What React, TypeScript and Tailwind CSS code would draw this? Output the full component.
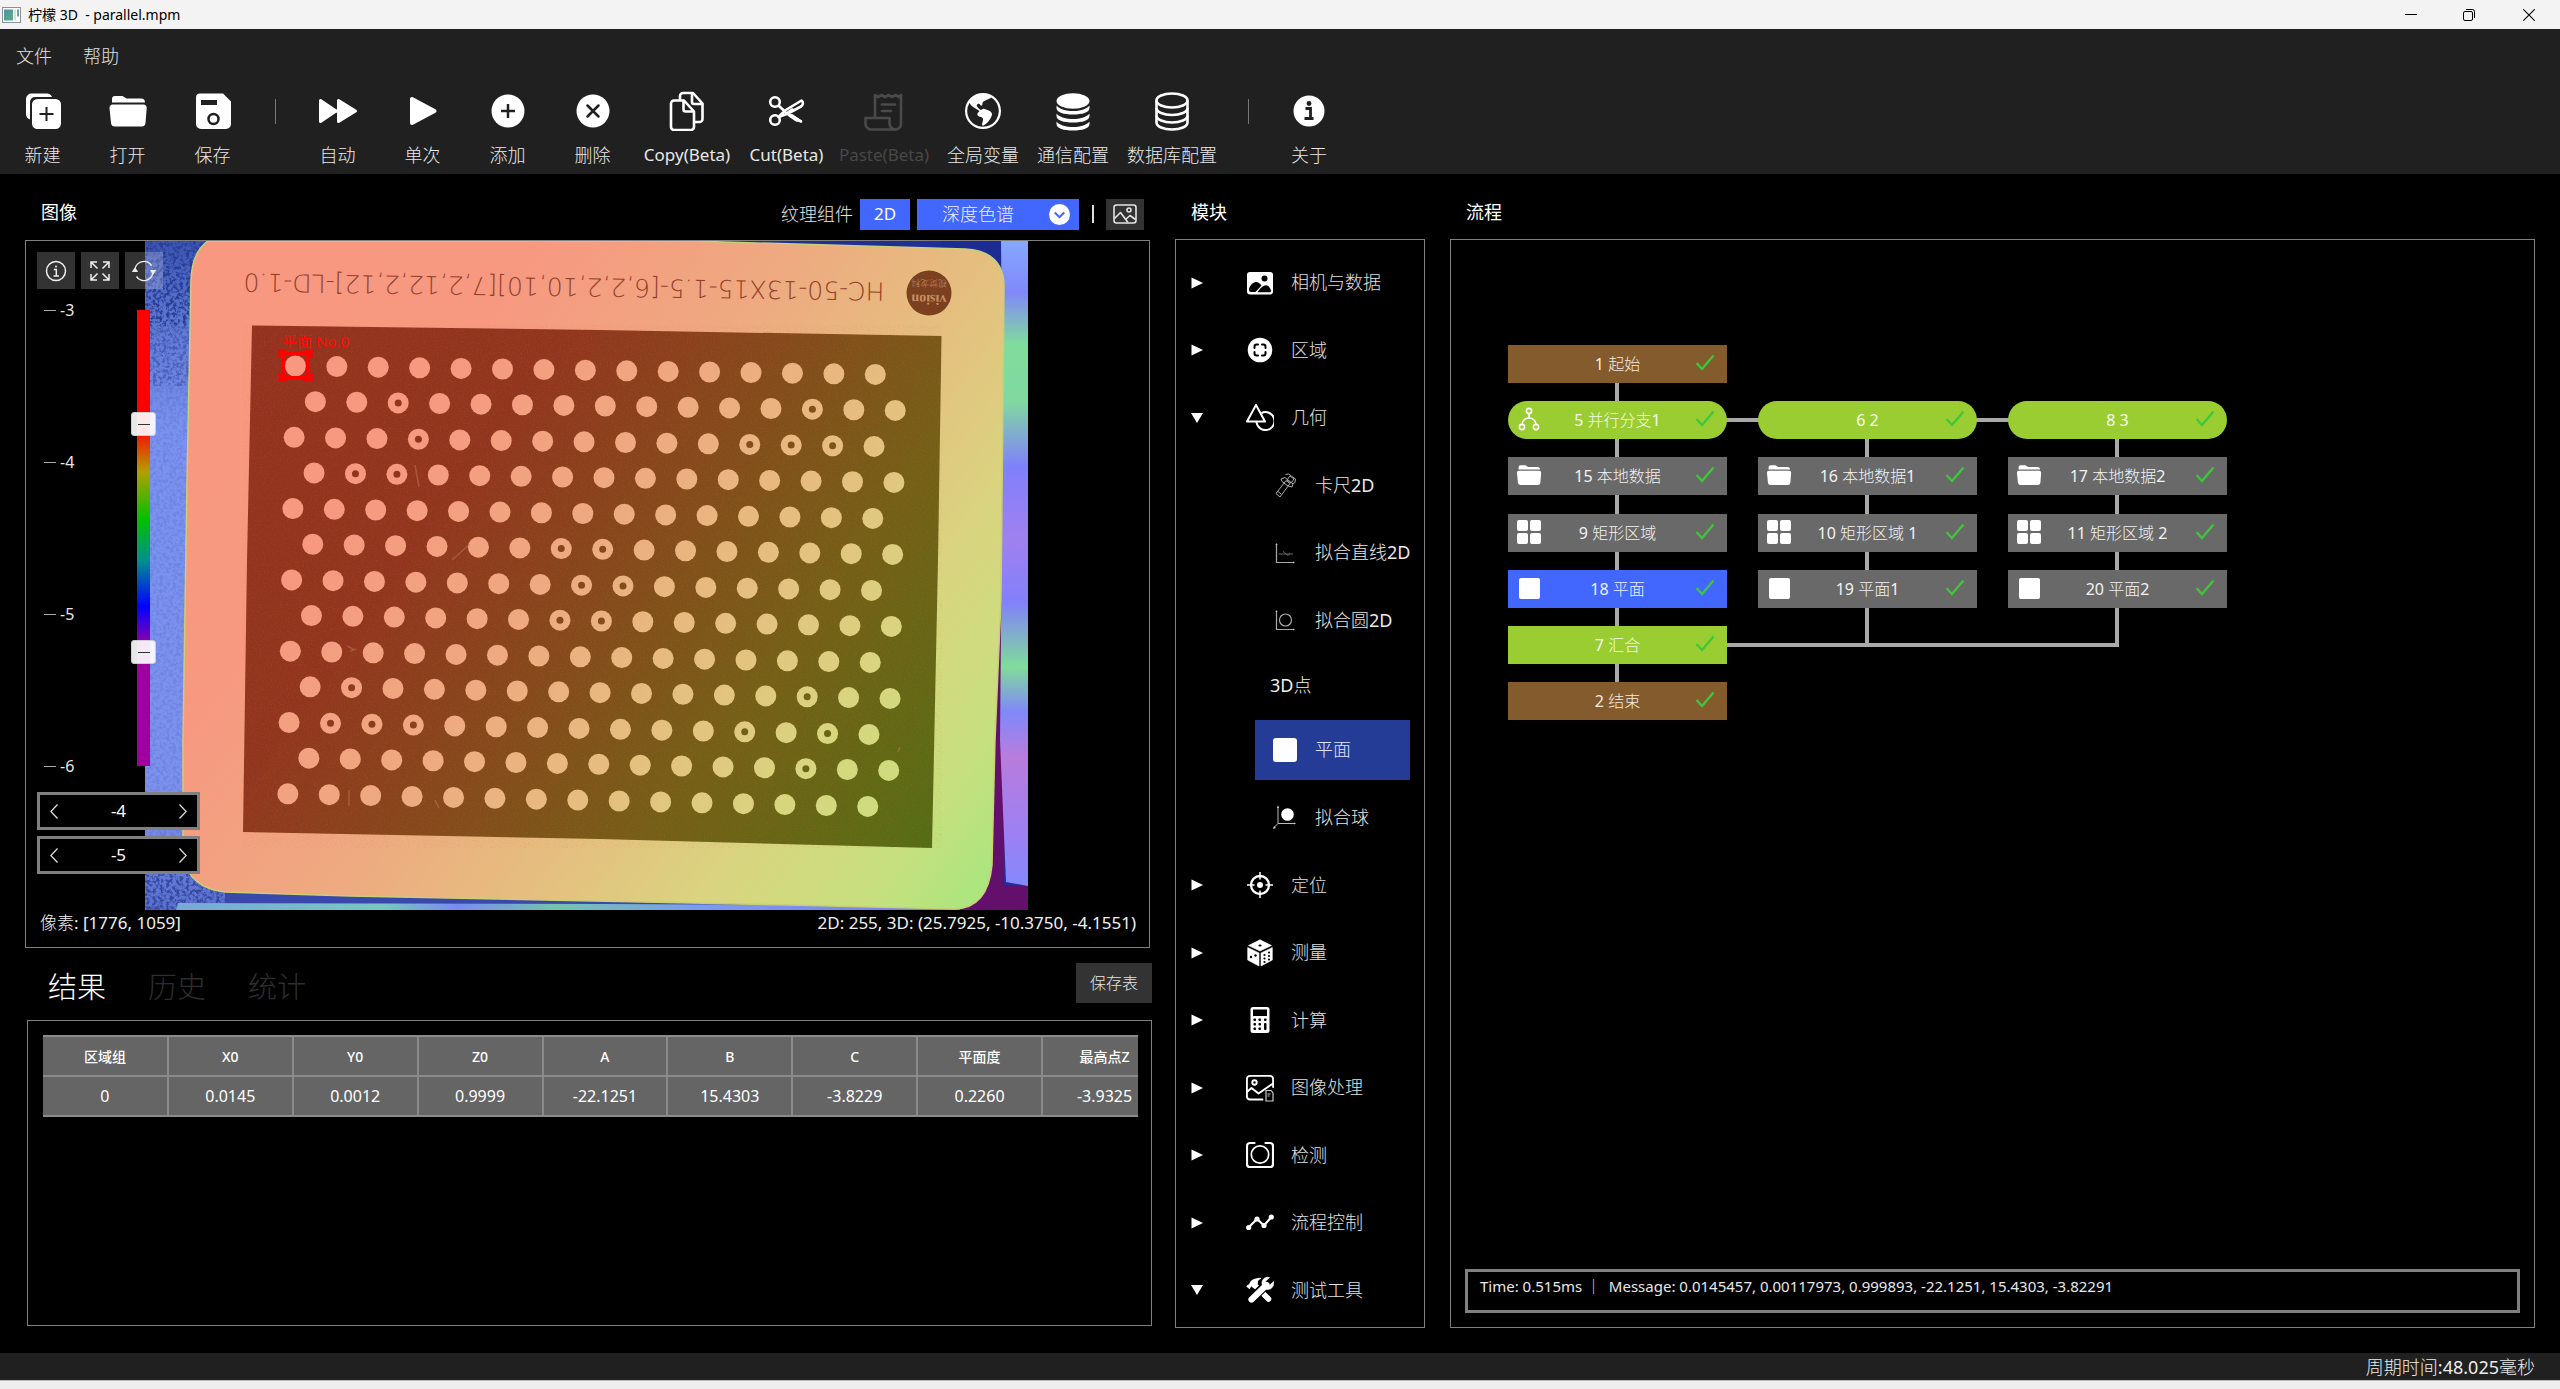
import React, { useState } from "react";
import { BsGlobeAmericas } from "react-icons/bs";

type IconProps = { children: React.ReactNode; className?: string; box?: number };

function Glyph({ children, className = "size-10", box = 40 }: IconProps) {
  return (
    <svg viewBox={`0 0 ${box} ${box}`} className={className} fill="none" stroke="none" aria-hidden="true">
      {children}
    </svg>
  );
}

/* Latin runs are set in the regular weight, Chinese runs in the light one. */
function Label({ text }: { text: string }) {
  return (
    <>
      {text.split(/([\x20-\x7e]+)/).map((part, i) =>
        i % 2 ? <span key={i} className="whitespace-pre font-normal">{part}</span> : part,
      )}
    </>
  );
}

/* ---------- toolbar icons ---------- */

const NewIcon = () => (
  <Glyph>
    <path d="M9 2.500h15a5.500 5.500 0 0 1 5 3.500H12a5 5 0 0 0-5 5v17.500a6 6 0 0 1-4-5V8a5.500 5.500 0 0 1 6-5.500z" fill="#fff" />
    <rect x="9" y="8" width="29" height="30" rx="5.500" fill="#fff" />
    <path d="M23.500 16v14M16.500 23h14" stroke="#202020" strokeWidth="2" />
  </Glyph>
);

const FolderIcon = ({ className = "size-10" }: { className?: string }) => (
  <Glyph className={className}>
    <path d="M4 11.500V8a3 3 0 0 1 3-3h7.500l4 2.500H33a4 4 0 0 1 4 4z" fill="#fff" />
    <path d="M5 13.500h30.500a3.200 3.200 0 0 1 3.200 3.500l-1.200 15a4 4 0 0 1-4 3.500H7a4 4 0 0 1-4-3.500L1.500 17A3.200 3.200 0 0 1 5 13.500z" fill="#fff" />
  </Glyph>
);

const SaveIcon = () => (
  <Glyph>
    <path d="M7 2.500h23l8 8V33a5 5 0 0 1-5 5H8a5 5 0 0 1-5-5V6.500a4 4 0 0 1 4-4z" fill="#fff" />
    <rect x="8" y="9" width="16" height="5" fill="#202020" />
    <circle cx="20.500" cy="28" r="5" stroke="#202020" strokeWidth="2.500" />
  </Glyph>
);

const ForwardIcon = () => (
  <Glyph>
    <path d="M2.500 9.500v21L18 20zM20.500 9.500v21L37.500 20z" fill="#fff" stroke="#fff" strokeWidth="3" strokeLinejoin="round" />
    <path d="M17 18.500h5v3h-5z" fill="#fff" />
  </Glyph>
);

const PlayIcon = () => (
  <Glyph>
    <path d="M9 8v24l22.500-12z" fill="#fff" stroke="#fff" strokeWidth="4" strokeLinejoin="round" />
  </Glyph>
);

const AddIcon = () => (
  <Glyph>
    <circle cx="20" cy="20" r="16.500" fill="#fff" />
    <path d="M20 13v14M13 20h14" stroke="#202020" strokeWidth="2.500" />
  </Glyph>
);

const RemoveIcon = () => (
  <Glyph>
    <circle cx="20" cy="20" r="16.500" fill="#fff" />
    <path d="M14.500 14.500l11 11M25.500 14.500l-11 11" stroke="#202020" strokeWidth="2.500" strokeLinecap="round" />
  </Glyph>
);

const CopyIcon = () => (
  <Glyph>
    <g stroke="#fff" strokeWidth="2.600" strokeLinejoin="round" strokeLinecap="round">
      <path d="M13 9V5a3 3 0 0 1 3-3h10l9.500 10.500V28a3 3 0 0 1-3 3H28" />
      <path d="M25 2.500V11a2 2 0 0 0 2 2h8" />
      <path d="M7 9.500h10L27 20.500V36a3 3 0 0 1-3 3H7a3 3 0 0 1-3-3V12.500a3 3 0 0 1 3-3z" />
      <path d="M16.500 10v8.500a2 2 0 0 0 2 2H26.500" />
    </g>
  </Glyph>
);

const CutIcon = () => (
  <Glyph>
    <g stroke="#fff" strokeWidth="2.600">
      <circle cx="8" cy="11" r="4.800" />
      <circle cx="8" cy="29" r="4.800" />
      <path d="M11.500 14.500L20 22.500 34 30.500 24.500 24M11.500 26L18 19.500 34.500 9.500 C37 11 36 14 34 15.500L21 22.500z" strokeLinejoin="round" />
    </g>
    <path d="M20 20.500l5-3.500 3 1.500-7 5zM24 23l11 6.500c-1.500 2-5.500 1.500-7 .5l-7-5z" fill="#fff" />
  </Glyph>
);

const PasteIcon = () => (
  <Glyph>
    <g stroke="#4a4a4a" strokeWidth="2.600" strokeLinejoin="round" strokeLinecap="round">
      <path d="M11 26V4l3 2 3.500-2 3.500 2 3.500-2 3.500 2 3.500-2 3.500 2 2-2v29a5.500 5.500 0 0 1-5.500 5.500" />
      <path d="M31.500 38.500H7a6 6 0 0 1-5.500-6V27h24v5.500a6 6 0 0 0 6 6z" />
      <path d="M18 13.500h13M18 20h9" />
    </g>
  </Glyph>
);

const DatabaseSolidIcon = () => (
  <Glyph>
    <ellipse cx="20" cy="10" rx="16.500" ry="7.800" fill="#fff" />
    {[0, 8, 16].map((dy) => (
      <path
        key={dy}
        transform={`translate(0 ${dy})`}
        d="M3.500 14.500C7 18.500 13 20 20 20s13-1.500 16.500-5.500V17c0 4.500-7.500 6.500-16.500 6.500S3.500 21.500 3.500 17z"
        fill="#fff"
      />
    ))}
  </Glyph>
);

const DatabaseIcon = () => (
  <Glyph>
    <g stroke="#fff" strokeWidth="2.600">
      <ellipse cx="20" cy="9.500" rx="15.500" ry="7" />
      <path d="M4.500 9.500v22c0 4 7 7 15.500 7s15.500-3 15.500-7v-22" />
      <path d="M4.500 17c0 4 7 7 15.500 7s15.500-3 15.500-7M4.500 24.500c0 4 7 7 15.500 7s15.500-3 15.500-7" />
    </g>
  </Glyph>
);

const AboutIcon = () => (
  <Glyph>
    <circle cx="20" cy="20" r="15.500" fill="#fff" />
    <circle cx="20" cy="12.500" r="2.400" fill="#202020" />
    <path d="M16.500 17.500H21.500V27M15.500 27.500h9" stroke="#202020" strokeWidth="2.800" />
  </Glyph>
);

/* ---------- module icons ---------- */

const PhotoIcon = () => (
  <Glyph box={28} className="size-7">
    <rect x="1" y="3" width="26" height="22.500" rx="3" fill="#fff" />
    <circle cx="18.500" cy="9.500" r="3" fill="#000" />
    <path d="M3 21c0-4 4-8 7-8 2 0 4 1.500 5.500 3.500L9.500 23H5c-1.200 0-2-.8-2-2zM11.500 23.200c2-3 5-7 8.500-7 2.500 0 4.500 3 5 5.500 0 1-.8 1.500-1.500 1.500z" fill="#000" />
  </Glyph>
);

const RegionIcon = () => (
  <Glyph box={28} className="size-7">
    <circle cx="14" cy="14" r="12.300" fill="#fff" />
    <path d="M8.500 12V10.500a2 2 0 0 1 2-2H12M16 8.500h1.500a2 2 0 0 1 2 2V12M19.500 16v1.500a2 2 0 0 1-2 2H16M12 19.500h-1.500a2 2 0 0 1-2-2V16" stroke="#000" strokeWidth="2" strokeLinecap="round" />
  </Glyph>
);

const ShapesIcon = () => (
  <Glyph box={28} className="size-7">
    <g stroke="#fff" strokeWidth="2" strokeLinejoin="round">
      <path d="M10 1L19 17.500H1z" />
      <path d="M15.500 9a9 9 0 1 1-5 9" />
    </g>
  </Glyph>
);

const TargetIcon = () => (
  <Glyph box={28} className="size-7">
    <circle cx="14" cy="14" r="9" stroke="#fff" strokeWidth="2.300" />
    <circle cx="14" cy="14" r="3" fill="#fff" />
    <path d="M14 1v7.500M14 19.500V27M1 14h7.500M19.500 14H27" stroke="#fff" strokeWidth="1.500" />
  </Glyph>
);

const DiceIcon = () => (
  <Glyph box={28} className="size-7">
    <path d="M14 .8L25.500 6.500 14 12 2.500 6.500zM1.700 8.500L13 14v13L1.700 21zM26.300 8.500L15 14v13l11.300-6z" fill="#fff" stroke="#fff" strokeWidth=".6" strokeLinejoin="round" />
    <g fill="#000">
      <ellipse cx="14" cy="6.500" rx="1.600" ry="1" />
      <circle cx="5" cy="18" r="1.200" />
      <circle cx="9.500" cy="16.500" r="1.200" />
      <circle cx="18.500" cy="16" r="1.100" />
      <circle cx="23" cy="13.500" r="1.100" />
      <circle cx="18.500" cy="19.500" r="1.100" />
      <circle cx="23" cy="17" r="1.100" />
      <circle cx="18.500" cy="23" r="1.100" />
      <circle cx="23" cy="20.500" r="1.100" />
    </g>
  </Glyph>
);

const CalculatorIcon = () => (
  <Glyph box={28} className="size-7">
    <rect x="4.500" y="1" width="19" height="26" rx="2.500" fill="#fff" />
    <rect x="7" y="3.500" width="14" height="6.500" fill="#000" />
    <g fill="#000">
      {[12.5, 17, 21.5].map((y) => (
        <React.Fragment key={y}>
          <rect x="7.500" y={y} width="2.500" height="2.500" rx=".8" />
          <rect x="12.500" y={y} width="2.500" height="2.500" rx=".8" />
        </React.Fragment>
      ))}
      <rect x="18" y="12.500" width="2.500" height="2.500" rx=".8" />
      <rect x="18" y="17" width="2.500" height="7" rx="1" />
    </g>
  </Glyph>
);

const ImageProcessIcon = () => (
  <Glyph box={28} className="size-7">
    <g stroke="#fff" strokeWidth="1.900" strokeLinecap="round" strokeLinejoin="round">
      <path d="M16.500 25.500H4A3.200 3.200 0 0 1 .9 22.500V5A3.200 3.200 0 0 1 4 1.900h20A3.200 3.200 0 0 1 27.100 5v8" />
      <path d="M1.500 17.500l4-3.500 7 5.500L27 9.500" />
      <circle cx="8.500" cy="8.500" r="2.200" />
    </g>
    <path d="M20 16.500h5l2 2.500v8h-7z" stroke="#ccc" strokeWidth="1.200" />
    <path d="M21.500 20h3M21.500 22h2" stroke="#ccc" />
  </Glyph>
);

const DetectIcon = () => (
  <Glyph box={28} className="size-7">
    <path d="M8.500 2H4a3 3 0 0 0-3 3v18a3 3 0 0 0 3 3h20a3 3 0 0 0 3-3V5a3 3 0 0 0-3-3h-4.500" stroke="#fff" strokeWidth="2.200" strokeLinecap="round" />
    <circle cx="14" cy="13.500" r="8.700" stroke="#fff" strokeWidth="1.700" />
  </Glyph>
);

const ControlIcon = () => (
  <Glyph box={28} className="size-7">
    <path d="M2.500 18.500L11 10l7 6.500L25.500 8" stroke="#fff" strokeWidth="2.200" />
    <g fill="#fff">
      <circle cx="2.700" cy="18.500" r="2.600" />
      <circle cx="11" cy="10" r="2.600" />
      <circle cx="18" cy="16.500" r="2.600" />
      <circle cx="25.300" cy="8" r="2.600" />
    </g>
  </Glyph>
);

const ToolsIcon = () => (
  <Glyph box={28} className="size-7">
    <path d="M9 9.500L22.500 23" stroke="#fff" strokeWidth="5.500" strokeLinecap="round" />
    <path d="M.3 10.500C1 9 2 8.500 3 8.500 4 5 7.500 2 14.500 1.800c.8 0 .9.900.2 1.200-2.500 1-3.200 2.200-2.700 4.200l-4.500 5-2.200-2-1.300 2.300c-.3.500-.9.500-1.300.1z" fill="#fff" />
    <path d="M4.500 24L20 9" stroke="#000" strokeWidth="9" />
    <path d="M5.500 23.500L20.500 9" stroke="#fff" strokeWidth="6.200" strokeLinecap="round" />
    <path d="M23.500 1.500c-5-1.300-8.700 3-7.200 7.500l3.700 4.200c4.500 1.300 8.800-2.500 7.500-7.700l-4 3.800-3.500-.6-.6-3.300z" fill="#fff" stroke="#fff" strokeWidth=".6" strokeLinejoin="round" />
  </Glyph>
);

const CaliperIcon = () => (
  <Glyph box={28} className="size-7">
    <g stroke="#aaa" strokeWidth="1">
      <path d="M5 22.500l10-13 4 3-10 13.500zM10 8l4-1.500 8 6.500-1 3-4-1-6-4.500zM14.500 3.500l3-.5 7 5-.5 3.500-3 1.500" />
      <path d="M16 9l3-4 4 3-3 4zM7 20.500l3 2.500" />
    </g>
  </Glyph>
);

const FitLineIcon = () => (
  <Glyph box={28} className="size-7">
    <path d="M5.500 5v18.500H23" stroke="#aaa" strokeWidth="1.200" />
    <path d="M7.500 15H22M12 12.500l5 4 2-2.500" stroke="#666" />
    <path d="M4.500 6l1-2 1 2zM22 22.500l2 1-2 1z" fill="#ccc" />
  </Glyph>
);

const FitCircleIcon = () => (
  <Glyph box={28} className="size-7">
    <path d="M5.500 5v18.500H23" stroke="#aaa" strokeWidth="1.200" />
    <circle cx="14.500" cy="14" r="6" stroke="#aaa" strokeWidth="1.200" />
    <path d="M4.500 6l1-2 1 2zM22 22.500l2 1-2 1z" fill="#ccc" />
  </Glyph>
);

const FitSphereIcon = () => (
  <Glyph box={28} className="size-7">
    <path d="M7 4v16.500H24M7 20.500l-4 4" stroke="#bbb" />
    <circle cx="16.500" cy="11.500" r="6.300" fill="#fff" />
    <path d="M6 5l1-3 1 3zM23 19.500l2 1-2 1zM2 26l1-3 2 2z" fill="#ccc" />
  </Glyph>
);

const PlaneIcon = () => <span className="block size-6 rounded-[3px] bg-white" />;

/* ---------- chrome ---------- */

function TitleBar() {
  return (
    <div className="flex h-[29px] items-center justify-between bg-[#f3f3f3] text-black">
      <div className="flex items-center gap-[7px] pl-0.5">
        <svg viewBox="0 0 19 16" className="h-4 w-[19px]" aria-hidden="true">
          <defs>
            <linearGradient id="app" x1="0" y1="0" x2="1" y2="1">
              <stop offset="0" stopColor="#4d8fae" />
              <stop offset="1" stopColor="#5bb17b" />
            </linearGradient>
          </defs>
          <rect x=".5" y=".5" width="18" height="15" fill="#fff" stroke="#8a9299" />
          <rect x="2" y="2.500" width="9" height="11" fill="url(#app)" />
          <rect x="12" y="2.500" width="2" height="11" fill="#d8dde0" />
          <rect x="15" y="2.500" width="2" height="7" fill="#6aa5a0" />
        </svg>
        <h1 className="whitespace-pre text-[14px] font-normal">{"柠檬 3D  - parallel.mpm"}</h1>
      </div>
      <div className="flex">
        <button aria-label="最小化" className="flex h-[29px] w-[58px] items-center justify-center">
          <svg viewBox="0 0 12 12" className="size-3"><path d="M0 5.500h12" stroke="#000" /></svg>
        </button>
        <button aria-label="还原" className="flex h-[29px] w-[58px] items-center justify-center">
          <svg viewBox="0 0 12 12" className="size-3" fill="none" stroke="#000">
            <rect x=".5" y="2.500" width="9" height="9" rx="1.500" />
            <path d="M3 .5h6.500a2 2 0 0 1 2 2V9" />
          </svg>
        </button>
        <button aria-label="关闭" className="flex h-[29px] w-[62px] items-center justify-center">
          <svg viewBox="0 0 12 12" className="size-3"><path d="M.3 .3l11.400 11.400M11.700 .3L.3 11.700" stroke="#000" strokeWidth="1.100" /></svg>
        </button>
      </div>
    </div>
  );
}

function Tool({ label, icon, width, latin, disabled }: { label: string; icon: React.ReactNode; width: string; latin?: boolean; disabled?: boolean }) {
  return (
    <button disabled={disabled} className={`${width} flex flex-col items-center gap-3 whitespace-nowrap ${disabled ? "text-[#484848]" : "text-[#e8e8e8]"}`}>
      {icon}
      <span className={latin ? "text-[17px] font-normal leading-6" : "leading-6"}>{label}</span>
    </button>
  );
}

function Divider({ width }: { width: string }) {
  return (
    <div className={`${width} flex h-10 items-center justify-center`}>
      <span className="h-[25px] w-px bg-[#777]" />
    </div>
  );
}

function Header() {
  return (
    <header className="h-[145px] bg-[#202020]">
      <nav className="flex gap-[31px] px-4 pt-[15px] leading-6 text-[#e0e0e0]">
        <button>文件</button>
        <button>帮助</button>
      </nav>
      <div className="flex pt-[23px]">
        <Tool label="新建" icon={<NewIcon />} width="w-[85px]" />
        <Tool label="打开" icon={<FolderIcon />} width="w-[85px]" />
        <Tool label="保存" icon={<SaveIcon />} width="w-[85px]" />
        <Divider width="w-10" />
        <Tool label="自动" icon={<ForwardIcon />} width="w-[85px]" />
        <Tool label="单次" icon={<PlayIcon />} width="w-[85px]" />
        <Tool label="添加" icon={<AddIcon />} width="w-[85px]" />
        <Tool label="删除" icon={<RemoveIcon />} width="w-[85px]" />
        <Tool label="Copy(Beta)" icon={<CopyIcon />} width="w-[104px]" latin />
        <Tool label="Cut(Beta)" icon={<CutIcon />} width="w-[95px]" latin />
        <Tool label="Paste(Beta)" icon={<PasteIcon />} width="w-[100px]" latin disabled />
        <Tool label="全局变量" icon={<span className="flex size-10 items-center justify-center"><BsGlobeAmericas className="size-9 text-white" /></span>} width="w-[98px]" />
        <Tool label="通信配置" icon={<DatabaseSolidIcon />} width="w-[82px]" />
        <Tool label="数据库配置" icon={<DatabaseIcon />} width="w-[116px]" />
        <Divider width="w-9" />
        <Tool label="关于" icon={<AboutIcon />} width="w-[86px]" />
      </div>
    </header>
  );
}

/* ---------- image view ---------- */

const HOLLOW = new Set([
  "1:2", "1:12", "2:3", "2:11", "2:12", "2:13", "3:1", "3:2", "5:6", "5:7", "6:7", "6:8",
  "7:6", "7:7", "9:1", "9:12", "10:1", "10:2", "10:3", "10:11", "10:13", "11:12",
]);

function dots() {
  const out: { key: string; x: number; y: number; hollow: boolean }[] = [];
  for (let i = 0; i < 13; i++) {
    for (let j = 0; j < 15; j++) {
      const x0 = i % 2 === 0 ? 295.4 - 0.63 * i : 316 - 0.65 * i;
      out.push({
        key: `${i}:${j}`,
        x: x0 + 41.42 * j,
        y: 366 + 35.65 * i + j * (0.6 + 0.025 * i),
        hollow: HOLLOW.has(`${i}:${j}`),
      });
    }
  }
  return out;
}

function DepthImage() {
  return (
    <svg viewBox="145 241 883 669" className="absolute left-[119px] top-0 h-[669px] w-[883px]" role="img" aria-label="深度色谱">
      <defs>
        <linearGradient id="board" gradientUnits="userSpaceOnUse" x1="300" y1="330" x2="1020" y2="850">
          <stop offset="0" stopColor="#f89880" />
          <stop offset=".15" stopColor="#f79880" />
          <stop offset=".4" stopColor="#eeaa80" />
          <stop offset=".6" stopColor="#e4c17f" />
          <stop offset=".75" stopColor="#d9d57f" />
          <stop offset=".9" stopColor="#c6e07e" />
          <stop offset="1" stopColor="#a8e67e" />
        </linearGradient>
        <linearGradient id="plate" gradientUnits="userSpaceOnUse" x1="300" y1="330" x2="1020" y2="850">
          <stop offset="0" stopColor="#93331f" />
          <stop offset=".25" stopColor="#91361e" />
          <stop offset=".45" stopColor="#854a1b" />
          <stop offset=".65" stopColor="#755f17" />
          <stop offset=".85" stopColor="#5d6b14" />
          <stop offset="1" stopColor="#457013" />
        </linearGradient>
        <linearGradient id="floor" x1="0" y1="0" x2="0" y2="1">
          <stop offset="0" stopColor="#3c55b4" />
          <stop offset=".12" stopColor="#5e78d2" />
          <stop offset=".28" stopColor="#7b92f0" />
          <stop offset=".85" stopColor="#7d90ee" />
          <stop offset="1" stopColor="#5a70cc" />
        </linearGradient>
        <linearGradient id="strip" x1="0" y1="0" x2="0" y2="1">
          <stop offset="0" stopColor="#86a8ff" />
          <stop offset=".08" stopColor="#8088fa" />
          <stop offset=".16" stopColor="#80dc9c" />
          <stop offset=".25" stopColor="#80d8a0" />
          <stop offset=".35" stopColor="#8080fc" />
          <stop offset=".46" stopColor="#a080f0" />
          <stop offset=".56" stopColor="#8280fa" />
          <stop offset=".66" stopColor="#80dc9a" />
          <stop offset=".73" stopColor="#8088fa" />
          <stop offset=".8" stopColor="#b87cdc" />
          <stop offset=".92" stopColor="#9c80f4" />
          <stop offset="1" stopColor="#8488fc" />
        </linearGradient>
        <linearGradient id="edge" x1="0" y1="0" x2="1" y2="0">
          <stop offset="0" stopColor="#79a8d8" />
          <stop offset=".25" stopColor="#78c8c0" />
          <stop offset=".34" stopColor="#7a8cf0" />
          <stop offset=".46" stopColor="#74c4ae" />
          <stop offset=".65" stopColor="#7c98f4" />
          <stop offset="1" stopColor="#7878e8" />
        </linearGradient>
        <filter id="grain" x="0" y="0" width="1" height="1" colorInterpolationFilters="sRGB">
          <feTurbulence type="fractalNoise" baseFrequency=".3" numOctaves="3" seed="4" />
          <feColorMatrix values="0 0 0 0 .16  0 0 0 0 .24  0 0 0 0 .58  0 0 0 4 -1.700" />
        </filter>
        <filter id="dust" x="0" y="0" width="1" height="1" colorInterpolationFilters="sRGB">
          <feTurbulence type="fractalNoise" baseFrequency=".7" numOctaves="2" seed="9" />
          <feColorMatrix values="0 0 0 0 .8  0 0 0 0 .45  0 0 0 0 .3  0 0 0 1.600 -.75" />
        </filter>
      </defs>

      <rect x="145" y="241" width="883" height="669" fill="#1f2f96" />
      <rect x="145" y="241" width="110" height="669" fill="url(#floor)" />
      <rect x="145" y="241" width="110" height="85" filter="url(#grain)" />
      <rect x="145" y="326" width="110" height="60" filter="url(#grain)" opacity=".5" />
      <rect x="145" y="386" width="110" height="454" filter="url(#grain)" opacity=".15" />
      <rect x="145" y="840" width="110" height="70" filter="url(#grain)" opacity=".8" />
      <path d="M225 890L990 900V910H225z" fill="#3a48ac" />
      <path d="M178 903L600 904 1000 906V910H176z" fill="url(#edge)" />
      <path d="M990 250H1006V700L1004 885 1028 886V910H960z" fill="#63106c" />
      <path d="M940 241H1006V500H995z" fill="#1d2c94" />
      <path d="M1001 241H1028V886L1006 882 1000 740 1003 400z" fill="url(#strip)" />

      <path
        d="M208 241H690L965 249Q1003 251 1004 285L1003 400 1001 600 995 740 992 865Q988 908 955 909L790 905 350 896 225 892Q190 888 183 858L183 740 187 480 191 280Q192 252 208 241z"
        fill="url(#board)"
        stroke="#c9cf74"
        strokeWidth="1.500"
      />
      <path d="M252 325.500L600 330 941.500 336 938 560 932 848 600 839 243 832 247 560z" fill="url(#plate)" />
      <path d="M252 325.500L600 330 941.500 336 938 560 932 848 600 839 243 832 247 560z" filter="url(#dust)" opacity=".25" />

      <g transform="rotate(180.800 564 287)">
        <text x="564" y="296" textAnchor="middle" fontFamily="'DejaVu Sans', sans-serif" fontSize="25" fill="#93402b">
          HC-50-13X15-1.5-[6,2,2,10,10][7,2,12,2,12]-LD-1.0
        </text>
      </g>

      <circle cx="929" cy="293" r="22.500" fill="#7b401f" />
      <g transform="rotate(181 929 293)" textAnchor="middle" fill="#c98f60">
        <text x="929" y="291" fontFamily="'Liberation Serif', serif" fontSize="14" fontWeight="700">vision</text>
        <text x="929" y="306" fontFamily="'Noto Sans CJK SC', sans-serif" fontSize="9">视觉龙科</text>
      </g>

      {dots().map((d) => (
        <g key={d.key}>
          <circle cx={d.x} cy={d.y} r="10.500" fill="url(#board)" />
          {d.hollow && <circle cx={d.x} cy={d.y} r="3.500" fill="url(#plate)" />}
        </g>
      ))}
      <path d="M347 646l6 3M350 651l6-2M415 465l4 22M452 560l18-16M898 752l2-5M349 790v16M435 800l4 8" stroke="#c98768" strokeWidth="1.500" opacity=".4" />

      <g stroke="#f00" fill="none">
        <rect x="283.500" y="353.500" width="24" height="24" strokeWidth="3" />
        <path d="M280 358v-7h7M304 351h7v7M311 373v7h-7M287 380h-7v-7" strokeWidth="4" opacity=".75" />
      </g>
      <text x="282" y="347" fontFamily="'Noto Sans', 'Noto Sans CJK SC', sans-serif" fontSize="15" fontWeight="400" fill="#ff0a05">平面 No.0</text>
    </svg>
  );
}

function Stepper({ label, value, onChange }: { label: string; value: number; onChange: (v: number) => void }) {
  return (
    <div className="flex h-[38px] w-[163px] items-center border-[3px] border-[#808080] bg-black">
      <button aria-label={`${label} -`} onClick={() => onChange(value - 1)} className="flex h-full w-7 items-center justify-center">
        <svg viewBox="0 0 8 15" className="h-[15px] w-2" fill="none" stroke="#ddd" strokeWidth="1.300"><path d="M7.500 .5L.8 7.500l6.700 7" /></svg>
      </button>
      <input aria-label={label} value={value} readOnly className="min-w-0 flex-1 bg-transparent text-center text-[17px] font-normal text-white outline-none" />
      <button aria-label={`${label} +`} onClick={() => onChange(value + 1)} className="flex h-full w-7 items-center justify-center">
        <svg viewBox="0 0 8 15" className="h-[15px] w-2" fill="none" stroke="#ddd" strokeWidth="1.300"><path d="M.5 .5l6.700 7-6.700 7" /></svg>
      </button>
    </div>
  );
}

function ViewButton({ label, children }: { label: string; children: React.ReactNode }) {
  return (
    <button aria-label={label} className="flex h-[37px] w-[38px] items-center justify-center bg-[#fff3]">
      <svg viewBox="0 0 24 24" className="size-6" fill="none" stroke="#eee" strokeWidth="1.500">
        {children}
      </svg>
    </button>
  );
}

function ImagePanel() {
  const [high, setHigh] = useState(-4);
  const [low, setLow] = useState(-5);
  return (
    <div className="relative h-[708px] overflow-hidden border border-[#808080]">
      <DepthImage />
      <div className="absolute left-[11px] top-[11px] flex gap-[6px]">
        <ViewButton label="信息">
          <circle cx="12" cy="12" r="9.500" />
          <path d="M9.800 10.500h2.500V17M9.500 17h5.500" />
          <circle cx="12" cy="7.500" r="1" fill="#eee" stroke="none" />
        </ViewButton>
        <ViewButton label="全屏">
          <path d="M3 9V3h6M3 3l6.500 6.500M15 3h6v6M21 3l-6.500 6.500M3 15v6h6M3 21l6.500-6.500M15 21h6v-6M21 21l-6.500-6.500" />
        </ViewButton>
        <ViewButton label="刷新">
          <path d="M3 12a9 9 0 0 1 16.500-5.500M21 12a9 9 0 0 1-16.500 5.500" />
          <path d="M.5 12.500h5l-2.500-3.500zM18.500 11.500h5l-2.500 3.500z" fill="#eee" strokeWidth="1" />
        </ViewButton>
      </div>

      <div className="absolute left-[18px] top-[57px] flex h-[480px] flex-col justify-between">
        {[-3, -4, -5, -6].map((n) => (
          <div key={n} className="flex h-6 items-center gap-1 text-[16px] font-normal text-[#e6e6e6]">
            <span className="h-px w-3 bg-[#aaa]" />
            {n}
          </div>
        ))}
      </div>
      <div className="absolute left-[111px] top-[69px] h-[456px] w-[13px] bg-[linear-gradient(to_bottom,#f00_0%,#f00_26%,#b0a000_35.500%,#00c000_46%,#008f8f_55%,#00f_65%,#a000a0_74%,#a000a0_100%)]" />
      {["top-[171px]", "top-[399px]"].map((top, i) => (
        <button
          key={top}
          role="slider"
          aria-label={i ? "下限" : "上限"}
          aria-valuenow={i ? low : high}
          className={`${top} absolute left-[105px] flex h-6 w-[25px] items-center justify-center rounded-[3px] border border-[#ccc] bg-[#ffffffe8]`}
        >
          <span className="h-px w-3 bg-[#333]" />
        </button>
      ))}
      <div className="absolute left-[11px] top-[551px] flex flex-col gap-[6px]">
        <Stepper label="上限" value={high} onChange={setHigh} />
        <Stepper label="下限" value={low} onChange={setLow} />
      </div>
      <div className="absolute inset-x-0 bottom-3 flex justify-between pl-[14px] pr-[13px] text-[17px] leading-6 text-[#f0f0f0]">
        <span><Label text="像素: [1776, 1059]" /></span>
        <span className="font-normal">2D: 255, 3D: (25.7925, -10.3750, -4.1551)</span>
      </div>
    </div>
  );
}

function ImageToolbar() {
  return (
    <div className="flex h-[66px] items-center justify-between pl-4 pr-[6px] pt-[14px]">
      <h2 className="self-start leading-[48px] font-normal text-white">图像</h2>
      <div className="flex items-center">
        <span className="text-[#e4e4e4]">纹理组件</span>
        <button className="ml-[7px] h-[31px] w-[50px] bg-[#4167ff] text-[17px] font-normal text-white">2D</button>
        <div className="relative ml-[7px]">
          <select aria-label="纹理组件" className="h-[31px] w-[162px] appearance-none bg-[#4167ff] pl-[25px] text-[18px] text-[#eef]">
            <option>深度色谱</option>
          </select>
          <svg viewBox="0 0 20 20" className="pointer-events-none absolute right-[9px] top-[5px] size-[21px]">
            <circle cx="10" cy="10" r="10" fill="#fff" />
            <path d="M5.500 8l4.500 4.500L14.500 8" fill="none" stroke="#4167ff" strokeWidth="2" />
          </svg>
        </div>
        <span className="ml-[13px] h-[18px] w-[2px] bg-[#ddd]" />
        <button aria-label="图像显示" className="ml-[12px] flex h-[31px] w-[38px] items-center justify-center bg-[#333]">
          <svg viewBox="0 0 24 20" className="h-5 w-6" fill="none" stroke="#e4e4e4" strokeWidth="1.600" strokeLinejoin="round">
            <rect x="1" y="1" width="22" height="18" rx="2.500" />
            <circle cx="16" cy="6" r="2" />
            <path d="M1.500 14.500l6-6 7.500 10M12.500 15.500l4.500-4 5.500 4" />
          </svg>
        </button>
      </div>
    </div>
  );
}

/* ---------- results ---------- */

const COLUMNS = ["区域组", "X0", "Y0", "Z0", "A", "B", "C", "平面度", "最高点Z"];
const VALUES = ["0", "0.0145", "0.0012", "0.9999", "-22.1251", "15.4303", "-3.8229", "0.2260", "-3.9325"];

function Results() {
  return (
    <section className="-mr-[2px] ml-[2px] flex flex-1 flex-col">
      <div className="flex h-[72px] items-start justify-between">
        <div role="tablist" className="flex gap-[42px] pl-[21px] pt-[18px] text-[29px] font-light leading-[42px]">
          <button role="tab" aria-selected="true" className="text-white">结果</button>
          <button role="tab" aria-selected="false" className="text-[#2e2e2e]">历史</button>
          <button role="tab" aria-selected="false" className="text-[#2e2e2e]">统计</button>
        </div>
        <button className="mt-[15px] h-10 w-[76px] bg-[#333] text-[16px] text-[#e4e4e4]">保存表</button>
      </div>
      <div className="flex-1 border border-[#808080] pl-[15px] pr-[13px] pt-[14px]">
        <div className="overflow-hidden">
          <table className="w-[1125px] table-fixed border-collapse text-center font-normal text-white">
            <thead>
              <tr className="h-10">
                {COLUMNS.map((c) => (
                  <th key={c} className="border-y-2 border-r-2 border-[#8a8a8a] bg-[#656565] p-0 text-[14px] font-medium">{c}</th>
                ))}
              </tr>
            </thead>
            <tbody>
              <tr className="h-10">
                {VALUES.map((v) => (
                  <td key={v} className="border-y-2 border-r-2 border-[#8a8a8a] bg-[#656565] p-0 text-[16px]">{v}</td>
                ))}
              </tr>
            </tbody>
          </table>
        </div>
      </div>
    </section>
  );
}

/* ---------- module tree ---------- */

type Branch = { label: string; icon: React.ReactNode; open?: boolean };

function BranchRow({ label, icon, open }: Branch) {
  return (
    <button aria-expanded={!!open} className="flex min-h-[60px] flex-1 basis-0 items-center pl-[15px] text-left">
      <svg viewBox="0 0 12 12" className="size-3" fill="#fff" aria-hidden="true">
        {open ? <path d="M0 1h12L6 11z" /> : <path d="M.5 0.500v11L12 6z" />}
      </svg>
      <span className="ml-[43px] flex w-7 justify-center">{icon}</span>
      <span className="ml-[17px] text-[#e0e0e0]">{label}</span>
    </button>
  );
}

function LeafRow({ label, icon, active }: { label: string; icon: React.ReactNode; active?: boolean }) {
  return (
    <div className="flex min-h-[60px] flex-1 basis-0 items-center pl-[79px] pr-[14px]">
      <button className={`flex h-[60px] w-full items-center overflow-hidden whitespace-nowrap pl-4 ${active ? "bg-[#253c96] text-[#dfe4ff]" : "text-[#e8e8e8]"}`}>
        <span className="flex w-7 shrink-0 justify-center">{icon}</span>
        <span className="ml-4"><Label text={label} /></span>
      </button>
    </div>
  );
}

function Modules() {
  return (
    <section className="flex flex-col pb-[25px]">
      <h2 className="h-[65px] pl-4 pt-[14px] font-normal leading-[48px] text-white">模块</h2>
      <div className="flex flex-1 flex-col border border-[#808080] pb-[3px] pt-[9px]">
        <BranchRow label="相机与数据" icon={<PhotoIcon />} />
        <BranchRow label="区域" icon={<RegionIcon />} />
        <BranchRow label="几何" icon={<ShapesIcon />} open />
        <LeafRow label="卡尺2D" icon={<CaliperIcon />} />
        <LeafRow label="拟合直线2D" icon={<FitLineIcon />} />
        <LeafRow label="拟合圆2D" icon={<FitCircleIcon />} />
        <p className="flex h-[62px] items-center pl-[94px] text-[#f0f0f0]"><Label text="3D点" /></p>
        <LeafRow label="平面" icon={<PlaneIcon />} active />
        <LeafRow label="拟合球" icon={<FitSphereIcon />} />
        <BranchRow label="定位" icon={<TargetIcon />} />
        <BranchRow label="测量" icon={<DiceIcon />} />
        <BranchRow label="计算" icon={<CalculatorIcon />} />
        <BranchRow label="图像处理" icon={<ImageProcessIcon />} />
        <BranchRow label="检测" icon={<DetectIcon />} />
        <BranchRow label="流程控制" icon={<ControlIcon />} />
        <BranchRow label="测试工具" icon={<ToolsIcon />} open />
      </div>
    </section>
  );
}

/* ---------- flow chart ---------- */

const Check = () => (
  <svg viewBox="0 0 20 17" className="absolute right-[12px] top-[9px] h-[17px] w-5" fill="none" aria-hidden="true">
    <path d="M1.500 9l5.500 6L18.500 1.500" stroke="#3fc63a" strokeWidth="2.300" />
  </svg>
);

const BranchIcon = () => (
  <svg viewBox="0 0 24 24" className="size-6" fill="none" stroke="#fff" strokeWidth="1.600">
    <circle cx="12" cy="4" r="2.600" />
    <circle cx="5" cy="20" r="2.600" />
    <circle cx="19" cy="20" r="2.600" />
    <path d="M12 6.500V11M5 17.500C5 13 9 11 12 11s7 2 7 6.500" />
  </svg>
);

const GridIcon = () => (
  <span className="grid size-6 grid-cols-2 gap-[2px]">
    <i className="rounded-[2px] bg-white" />
    <i className="rounded-[2px] bg-white" />
    <i className="rounded-[2px] bg-white" />
    <i className="rounded-[2px] bg-white" />
  </span>
);

const SquareIcon = () => <span className="block size-[21px] rounded-[2px] bg-white" />;

type NodeData = { label: string; x: number; y: number; kind: string; icon?: React.ReactNode };

const BROWN = "bg-[#835b2d] text-[#f4ece2]";
const GREEN = "bg-[#9acd32] text-[#f8fcec]";
const PILL = "bg-[#9acd32] text-[#f8fcec] rounded-full";
const GRAY = "bg-[#696969] text-[#f2f2f2]";
const BLUE = "bg-[#4167ff] text-[#eef1ff]";

const FOLDER = <FolderIcon className="size-[26px]" />;

const NODES: NodeData[] = [
  { label: "1 起始", x: 57, y: 105, kind: BROWN },
  { label: "5 并行分支1", x: 57, y: 161, kind: PILL, icon: <BranchIcon /> },
  { label: "15 本地数据", x: 57, y: 217, kind: GRAY, icon: FOLDER },
  { label: "9 矩形区域", x: 57, y: 274, kind: GRAY, icon: <GridIcon /> },
  { label: "18 平面", x: 57, y: 330, kind: BLUE, icon: <SquareIcon /> },
  { label: "7 汇合", x: 57, y: 386, kind: GREEN },
  { label: "2 结束", x: 57, y: 442, kind: BROWN },
  { label: "6 2", x: 307, y: 161, kind: PILL },
  { label: "16 本地数据1", x: 307, y: 217, kind: GRAY, icon: FOLDER },
  { label: "10 矩形区域 1", x: 307, y: 274, kind: GRAY, icon: <GridIcon /> },
  { label: "19 平面1", x: 307, y: 330, kind: GRAY, icon: <SquareIcon /> },
  { label: "8 3", x: 557, y: 161, kind: PILL },
  { label: "17 本地数据2", x: 557, y: 217, kind: GRAY, icon: FOLDER },
  { label: "11 矩形区域 2", x: 557, y: 274, kind: GRAY, icon: <GridIcon /> },
  { label: "20 平面2", x: 557, y: 330, kind: GRAY, icon: <SquareIcon /> },
];

function Flow() {
  return (
    <section className="flex min-w-0 flex-col pb-[25px]">
      <h2 className="h-[65px] pl-4 pt-[14px] font-normal leading-[48px] text-white">流程</h2>
      <div className="relative flex flex-1 flex-col justify-end overflow-hidden border border-[#808080] px-[14px] pb-[14px]">
        <svg className="absolute left-0 top-0 h-[500px] w-[800px]" viewBox="0 0 800 500" fill="none" stroke="#a9a9a9" strokeWidth="4" aria-hidden="true">
          <path d="M166 110V460M416 180V405M666 180V405M166 180H666M166 405H668" />
        </svg>
        {NODES.map((n) => (
          <div key={n.label} className={`${n.kind} absolute flex h-[38px] w-[219px] items-center justify-center whitespace-nowrap text-[16px]`} style={{ left: n.x, top: n.y }}>
            {n.icon && <span className="absolute left-2 top-1 flex h-7 w-[26px] items-center justify-center">{n.icon}</span>}
            <Label text={n.label} />
            <Check />
          </div>
        ))}
        <div className="h-[44px] whitespace-pre border-[3px] border-[#808080] bg-black pl-3 text-[15px] font-normal leading-[28px] text-[#e8e8e8]">
          {"Time: 0.515ms │  Message: 0.0145457, 0.00117973, 0.999893, -22.1251, 15.4303, -3.82291"}
        </div>
      </div>
    </section>
  );
}

export default function App() {
  return (
    <div className="flex min-h-screen flex-col bg-black font-['Noto_Sans','Noto_Sans_CJK_SC',sans-serif] text-[18px] font-light">
      <TitleBar />
      <Header />
      <main className="grid flex-1 grid-cols-[1125fr_250px_1085fr] gap-[25px] px-[25px]">
        <section className="flex min-w-0 flex-col pb-[27px]">
          <ImageToolbar />
          <ImagePanel />
          <Results />
        </section>
        <Modules />
        <Flow />
      </main>
      <footer className="flex h-[27px] items-center justify-end bg-[#202020] pr-[25px] leading-6 text-[#ececec]"><Label text="周期时间:48.025毫秒" /></footer>
      <div className="h-[9px] border-t border-[#bbb] bg-[#eee]" />
    </div>
  );
}
